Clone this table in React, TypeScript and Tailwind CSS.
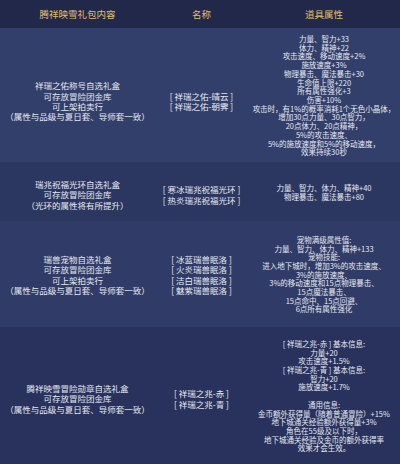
import React from "react";

type Row = {
  bg: string;
  h: string;
  pad: string;
  box: string[];
  names: string[];
  attrs: string[];
};

const rows: Row[] = [
  {
    bg: "bg-[#323f6b]",
    h: "h-[134px]",
    pad: "pt-[12px]",
    box: [
      "祥瑞之佑称号自选礼盒",
      "可存放冒险团金库",
      "可上架拍卖行",
      "（属性与品级与夏日套、导师套一致）",
    ],
    names: ["[ 祥瑞之佑-晴云 ]", "[ 祥瑞之佑-朝霁 ]"],
    attrs: [
      "力量、智力+33",
      "体力、精神+22",
      "攻击速度、移动速度+2%",
      "施放速度+3%",
      "物理暴击、魔法暴击+30",
      "生命值上限+220",
      "所有属性强化+3",
      "伤害+10%",
      "攻击时，有1%的概率消耗1个无色小晶体，",
      "增加30点力量、30点智力，",
      "20点体力、20点精神，",
      "5%的攻击速度、",
      "5%的施放速度和5%的移动速度，",
      "效果持续30秒",
    ],
  },
  {
    bg: "bg-[#2c3761]",
    h: "h-[59px]",
    pad: "pt-[6px]",
    box: ["瑞兆祝福光环自选礼盒", "可存放冒险团金库", "（光环的属性将有所提升）"],
    names: ["[ 寒冰瑞兆祝福光环 ]", "[ 热炎瑞兆祝福光环 ]"],
    attrs: ["力量、智力、体力、精神+40", "物理暴击、魔法暴击+80"],
  },
  {
    bg: "bg-[#303c67]",
    h: "h-[106px]",
    pad: "pt-[1px]",
    box: [
      "瑞兽宠物自选礼盒",
      "可存放冒险团金库",
      "可上架拍卖行",
      "（属性与品级与夏日套、导师套一致）",
    ],
    names: ["[ 冰蓝瑞兽眠洛 ]", "[ 火炎瑞兽眠洛 ]", "[ 洁白瑞兽眠洛 ]", "[ 魅紫瑞兽眠洛 ]"],
    attrs: [
      "宠物满级属性值:",
      "力量、智力、体力、精神+133",
      "宠物技能:",
      "进入地下城时，增加3%的攻击速度、",
      "3%的施放速度、",
      "3%的移动速度和15点物理暴击、",
      "15点魔法暴击、",
      "15点命中、15点回避、",
      "6点所有属性强化",
    ],
  },
  {
    bg: "bg-[#28325d]",
    h: "h-[137px]",
    pad: "pt-[6px]",
    box: ["腾祥映雪冒险勋章自选礼盒", "可存放冒险团金库", "（属性与品级与夏日套、导师套一致）"],
    names: ["[ 祥瑞之兆-赤 ]", "[ 祥瑞之兆-青 ]"],
    attrs: [
      "[ 祥瑞之兆-赤 ] 基本信息:",
      "力量+20",
      "攻击速度+1.5%",
      "[ 祥瑞之兆-青 ] 基本信息:",
      "智力+20",
      "施放速度+1.7%",
      "\u00a0",
      "通用信息:",
      "金币额外获得量（随着普通冒险）+15%",
      "地下城通关经验额外获得量+3%",
      "角色在55级及以下时，",
      "地下城通关经验及金币的额外获得率",
      "效果才会生效。",
    ],
  },
];

const App = () => {
  return (
    <div
      className="w-[400px] h-[464px] overflow-hidden bg-[#28325d] text-[#e6e9f2]"
      style={{ fontFamily: '"Noto Sans CJK SC", "Noto Sans", sans-serif' }}
    >
      <div className="grid grid-cols-[155px_93px_152px] h-[28px] bg-[#222849] text-[9.5px] text-[#e3bd6e] items-center text-center">
        <div>腾祥映雪礼包内容</div>
        <div>名称</div>
        <div>道具属性</div>
      </div>
      {rows.map((r, i) => (
        <div
          key={i}
          className={`grid grid-cols-[155px_93px_152px] items-center text-center ${r.bg} ${r.h}`}
        >
          <div className={`text-[8.5px] leading-[10.3px] whitespace-nowrap ${r.pad}`}>
            {r.box.map((t, j) => (
              <div key={j}>{t}</div>
            ))}
          </div>
          <div className={`text-[8.5px] leading-[10.3px] whitespace-nowrap ${r.pad}`}>
            {r.names.map((t, j) => (
              <div key={j}>{t}</div>
            ))}
          </div>
          <div className="text-[7.5px] leading-[8.7px] whitespace-nowrap pt-[2px]">
            {r.attrs.map((t, j) => (
              <div key={j}>{t}</div>
            ))}
          </div>
        </div>
      ))}
    </div>
  );
};

export default App;
